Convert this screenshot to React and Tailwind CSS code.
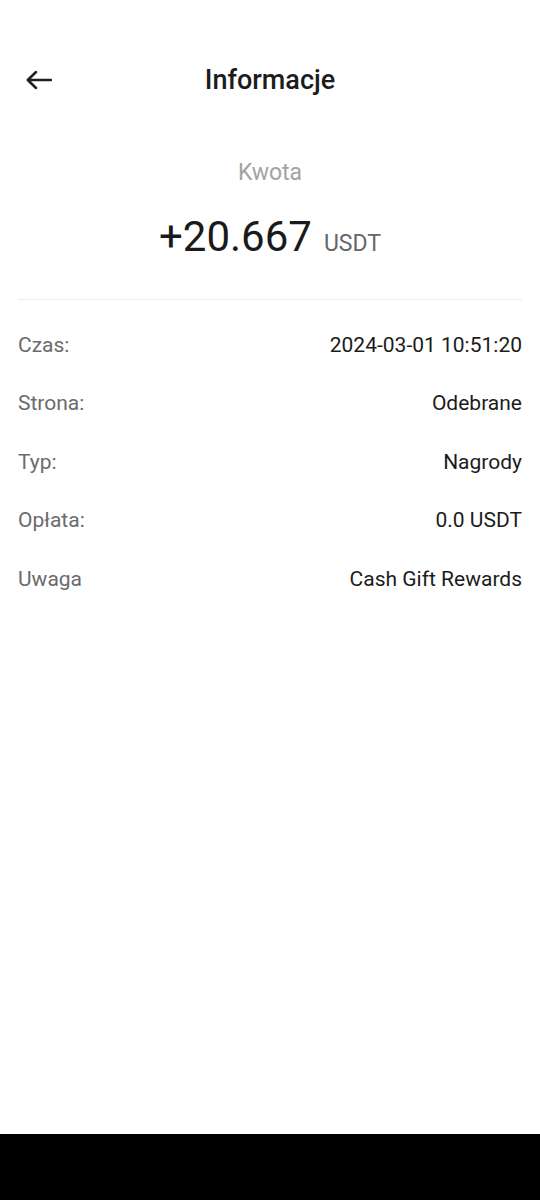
import React from 'react';

const rows = [
  ['Czas:', '2024-03-01 10:51:20'],
  ['Strona:', 'Odebrane'],
  ['Typ:', 'Nagrody'],
  ['Opłata:', '0.0 USDT'],
  ['Uwaga', 'Cash Gift Rewards'],
];

export default function App() {
  return (
    <div className="w-[540px] h-[1200px] bg-white flex flex-col font-['Roboto',sans-serif]">
      <header className="relative mt-14 h-12 flex items-center justify-center">
        <button className="absolute left-[26px] top-[14px]">
          <svg width="26" height="20" viewBox="0 0 26 20" fill="none" stroke="#1f1f1f" strokeWidth="2.5" strokeLinecap="round" strokeLinejoin="round">
            <path d="M25 10H2M10 2L1.8 10L10 18" />
          </svg>
        </button>
        <h1 className="text-[27px] font-medium text-[#1c1c1c]">Informacje</h1>
      </header>

      <section className="mx-[18px] mt-[55px] pb-[37px] border-b border-[#ececec] flex flex-col items-center">
        <p className="text-[23px] leading-[28px] text-[#a3a3a3]">Kwota</p>
        <p className="mt-[25px] h-[50px] flex items-baseline">
          <span className="text-[42px] leading-[50px] text-[#1a1a1a]">+20.667</span>
          <span className="ml-3 text-[23px] text-[#666666]">USDT</span>
        </p>
      </section>

      <div className="mx-[18px] pt-4 flex flex-col">
        {rows.map(([label, value]) => (
          <div key={label} className="h-[58.5px] flex items-center justify-between text-[21px]">
            <span className="text-[#6b6b6b]">{label}</span>
            <span className="text-[#1c1c1c]">{value}</span>
          </div>
        ))}
      </div>

      <div className="mt-auto h-[66px] bg-black" />
    </div>
  );
}
